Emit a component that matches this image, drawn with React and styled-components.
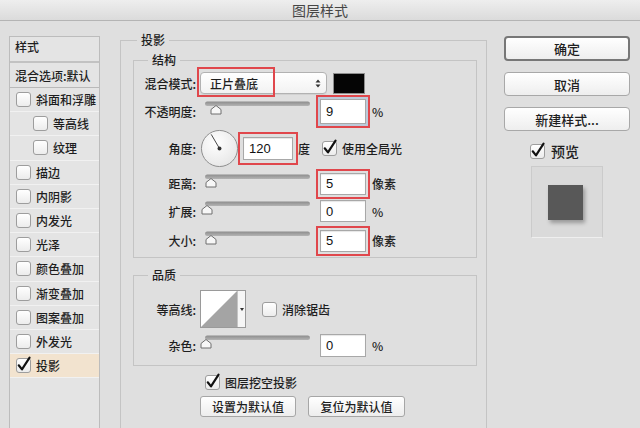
import React from "react";
import styled, { createGlobalStyle } from "styled-components";

const GlobalStyle = createGlobalStyle`
  html, body { margin: 0; padding: 0; background: #dfdfdf; overflow: hidden; }
  body { font-family: "Noto Sans CJK SC", "Noto Sans", sans-serif; font-weight: 500; color: #1e1e1e; }
  * { box-sizing: border-box; }
`;

const Window = styled.div`
  width: 640px;
  height: 428px;
  display: flex;
  flex-direction: column;
  overflow: hidden;
  background: #dfdfdf;
`;

const TitleBar = styled.div`
  height: 21px;
  flex-shrink: 0;
  display: flex;
  align-items: center;
  justify-content: center;
  background: linear-gradient(#eeeeee, #dbdbdb);
  border-bottom: 1px solid #b4b4b4;
  font-size: 14px;
  font-weight: 400;
  line-height: 20px;
  color: #454545;
`;

const Body = styled.div`
  flex: 1;
  display: flex;
  align-items: flex-start;
  min-height: 0;
`;

/* ---------- left style list ---------- */
const StyleList = styled.div`
  margin: 15px 0 0 9px;
  width: 91px;
  height: 400px;
  flex-shrink: 0;
  border: 1px solid #bcbcbc;
  background: #e4e4e4;
  display: flex;
  flex-direction: column;
  font-size: 12px;
`;

const ListHeader = styled.div`
  height: 26px;
  padding: 3px 0 0 5px;
  line-height: 14px;
  border-bottom: 2px solid #c2c2c2;
`;

const ListOptions = styled.div`
  height: 25px;
  display: flex;
  align-items: center;
  padding-left: 5px;
  border-bottom: 1px solid #b9b9b9;
  white-space: nowrap;
`;

const ListRow = styled.div`
  height: 24.2px;
  display: flex;
  align-items: center;
  gap: 5px;
  padding-left: ${(p) => (p.$indent ? 23 : 6)}px;
  border-bottom: 1px solid #f1f1f1;
  background: ${(p) => (p.$active ? "#f2e3cf" : "transparent")};
  white-space: nowrap;
`;

/* ---------- checkbox ---------- */
const Box = styled.span`
  display: inline-block;
  position: relative;
  width: 15px;
  height: 15px;
  flex-shrink: 0;
  margin-left: ${(p) => p.$ml || 0}px;
  border: 1px solid #9d9d9d;
  border-radius: 3px;
  background: linear-gradient(#ffffff, #ececec);
  svg { position: absolute; left: 0; top: 0; overflow: visible; }
`;

function Check({ checked, ml }) {
  return (
    <Box $ml={ml}>
      {checked && (
        <svg width="13" height="13" viewBox="0 0 12 12">
          <path d="M1.6 5.8 L4.6 9.6 L11.6 -1.2" stroke="#111" strokeWidth="2" fill="none" strokeLinecap="round" strokeLinejoin="round" />
        </svg>
      )}
    </Box>
  );
}

/* ---------- main column ---------- */
const MainCol = styled.div`
  margin: 12px 0 0 20px;
  width: 367px;
  flex-shrink: 0;
`;

const Group = styled.fieldset`
  margin: ${(p) => p.$mt || 0}px 0 0 0;
  padding: ${(p) => p.$pad};
  min-width: 0;
  height: ${(p) => (p.$h ? `${p.$h}px` : "auto")};
  border: 1px solid #c4c4c4;
  display: flex;
  flex-direction: column;
`;

const Legend = styled.legend`
  font-size: 12px;
  line-height: 14px;
  padding: 0 4px;
  margin-left: ${(p) => p.$ml || 0}px;
  color: #1e1e1e;
`;

const FormRow = styled.div`
  height: ${(p) => p.$h}px;
  margin-top: ${(p) => p.$mt || 0}px;
  display: flex;
  align-items: center;
  flex-shrink: 0;
`;

const Label = styled.span`
  width: 52px;
  flex-shrink: 0;
  text-align: right;
  font-size: 12px;
  white-space: nowrap;
`;

const Unit = styled.span`
  margin-left: ${(p) => p.$ml ?? 6}px;
  font-size: 12px;
  white-space: nowrap;
`;

const NumField = styled.input`
  width: ${(p) => p.$w || 46}px;
  height: ${(p) => p.$h || 23}px;
  flex-shrink: 0;
  margin: 0 0 0 ${(p) => p.$ml ?? 9}px;
  padding: 0 0 0 5px;
  border: 1px solid #a8a8a8;
  background: #fff;
  font: 13px "Liberation Sans", Arial, sans-serif;
  color: #111;
  box-shadow: ${(p) => (p.$focus ? "0 0 0 2px #bccbdb" : "inset 0 1px 1px rgba(0,0,0,0.1)")};
  outline: ${(p) => (p.$mark ? "2px solid #e0474c" : "none")};
  outline-offset: ${(p) => p.$off ?? 2}px;
`;

const SelectWrap = styled.div`
  position: relative;
  margin-left: 4px;
`;

const SelectBox = styled.div`
  width: 127px;
  height: 22px;
  border: 1px solid #b2b2b2;
  border-radius: 4px;
  background: linear-gradient(#ffffff, #f2f2f2);
  display: flex;
  align-items: center;
  justify-content: space-between;
  padding: 0 5px 0 9px;
  font-size: 12px;
  box-shadow: 0 1px 0 rgba(0, 0, 0, 0.06);
`;

const RedBox = styled.span`
  position: absolute;
  left: -3px;
  top: -5px;
  width: 78px;
  height: 30px;
  border: 2px solid #e0474c;
  pointer-events: none;
`;

const Swatch = styled.div`
  width: 32px;
  height: 21px;
  margin-left: 6px;
  background: #050505;
  border: 1px solid #8e8e8e;
`;

const SliderSvg = styled.svg`
  margin-left: 3px;
  flex-shrink: 0;
  display: block;
`;

function Slider({ pos }) {
  const cx = pos - 199;
  return (
    <SliderSvg width="112" height="20" viewBox="0 0 112 20">
      <defs>
        <linearGradient id="trk" x1="0" y1="0" x2="0" y2="1">
          <stop offset="0" stopColor="#8d8d8d" />
          <stop offset="1" stopColor="#b4b4b4" />
        </linearGradient>
      </defs>
      <rect x="6" y="0.5" width="105" height="4.5" rx="2.2" fill="url(#trk)" />
      <path
        d={`M${cx - 5} 13 L${cx - 5} 8.5 L${cx} 4.5 L${cx + 5} 8.5 L${cx + 5} 13 Z`}
        fill="#f7f7f7"
        stroke="#6f6f6f"
        strokeWidth="1"
        strokeLinejoin="round"
      />
    </SliderSvg>
  );
}

const Dial = styled.svg`
  margin-left: 4px;
  flex-shrink: 0;
  display: block;
`;

const ContourBox = styled.div`
  margin-left: 4px;
  width: 46px;
  height: 38px;
  border: 1px solid #9a9a9a;
  background: #fff;
  display: flex;
  flex-shrink: 0;
`;

const ContourStrip = styled.div`
  width: 8px;
  border-left: 1px solid #c4c4c4;
  background: #f6f6f6;
  display: flex;
  align-items: center;
  justify-content: center;
`;

const CheckLine = styled.div`
  height: 18px;
  margin: ${(p) => p.$m};
  display: flex;
  align-items: center;
  gap: ${(p) => p.$gap || 5}px;
  font-size: ${(p) => p.$fs || 12}px;
  white-space: nowrap;
`;

const ButtonRow = styled.div`
  margin: 5px 0 0 67px;
  display: flex;
  gap: 12px;
`;

const SmallButton = styled.button`
  width: ${(p) => p.$w}px;
  height: 21px;
  padding: 0;
  border: 1px solid #a6a6a6;
  border-radius: 3px;
  background: linear-gradient(#ffffff, #ededed);
  font: 500 12px "Noto Sans CJK SC", sans-serif;
  color: #1e1e1e;
`;

/* ---------- right column ---------- */
const SideCol = styled.div`
  margin: 15px 0 0 17px;
  width: 126px;
  flex-shrink: 0;
  display: flex;
  flex-direction: column;
`;

const SideButton = styled.button`
  height: ${(p) => (p.$primary ? 25 : 24)}px;
  margin-top: ${(p) => p.$mt || 0}px;
  padding: 0;
  border: ${(p) => (p.$primary ? "2px solid #777" : "1px solid #a8a8a8")};
  border-radius: 4px;
  background: linear-gradient(#ffffff, #eeeeee);
  font: 500 13px "Noto Sans CJK SC", sans-serif;
  color: #1e1e1e;
`;

const PreviewBox = styled.div`
  margin: 6px 0 0 27px;
  width: 72px;
  height: 72px;
  border: 1px solid #cbcbcb;
  border-bottom-color: #efefef;
  background: #dadada;
  display: flex;
  align-items: center;
  justify-content: center;
  padding-right: 3px;
`;

const PreviewSquare = styled.div`
  width: 35px;
  height: 35px;
  background: #585858;
  box-shadow: 2px 3px 4px rgba(0, 0, 0, 0.3);
`;

const listItems = [
  { t: "斜面和浮雕" },
  { t: "等高线", indent: true },
  { t: "纹理", indent: true },
  { t: "描边" },
  { t: "内阴影" },
  { t: "内发光" },
  { t: "光泽" },
  { t: "颜色叠加" },
  { t: "渐变叠加" },
  { t: "图案叠加" },
  { t: "外发光" },
  { t: "投影", checked: true, active: true },
];

function UpDown() {
  return (
    <svg width="6" height="9" viewBox="0 0 6 9">
      <path d="M0.5 3.5 L3 0.5 L5.5 3.5 Z M0.5 5.5 L3 8.5 L5.5 5.5 Z" fill="#333" />
    </svg>
  );
}

export default function App() {
  return (
    <Window>
      <GlobalStyle />
      <TitleBar>图层样式</TitleBar>
      <Body>
        <StyleList>
          <ListHeader>样式</ListHeader>
          <ListOptions>混合选项:默认</ListOptions>
          {listItems.map((it) => (
            <ListRow key={it.t} $indent={it.indent} $active={it.active}>
              <Check checked={it.checked} />
              {it.t}
            </ListRow>
          ))}
        </StyleList>

        <MainCol>
          <Group $pad="0 9px 0 12px" $h={420}>
            <Legend $ml={4}>投影</Legend>
            <Group $mt={6} $pad="3px 10px 1px 10px">
              <Legend $ml={4}>结构</Legend>
              <FormRow $h={26}>
                <Label>混合模式:</Label>
                <SelectWrap>
                  <SelectBox>
                    正片叠底
                    <UpDown />
                  </SelectBox>
                  <RedBox />
                </SelectWrap>
                <Swatch />
              </FormRow>
              <FormRow $h={30}>
                <Label>不透明度:</Label>
                <Slider pos={216} />
                <NumField readOnly value="9" $h={25} $mark $focus $off={2} />
                <Unit>%</Unit>
              </FormRow>
              <FormRow $h={44}>
                <Label>角度:</Label>
                <Dial width="39" height="39" viewBox="0 0 40 40">
                  <defs>
                    <radialGradient id="dialg" cx="0.4" cy="0.35" r="0.7">
                      <stop offset="0" stopColor="#ffffff" />
                      <stop offset="1" stopColor="#e6e6e6" />
                    </radialGradient>
                  </defs>
                  <circle cx="20" cy="20" r="18.5" fill="url(#dialg)" stroke="#8c8c8c" strokeWidth="1" />
                  <line x1="20" y1="20" x2="11.5" y2="5.5" stroke="#444" strokeWidth="1" />
                  <circle cx="20" cy="20" r="2" fill="#333" />
                </Dial>
                <NumField readOnly value="120" $w={50} $ml={4} $mark $off={3} />
                <Unit $ml={5}>度</Unit>
                <Check checked ml={12} />
                <Unit $ml={5}>使用全局光</Unit>
              </FormRow>
              <FormRow $h={27}>
                <Label>距离:</Label>
                <Slider pos={211} />
                <NumField readOnly value="5" $h={22} $mark $off={2} />
                <Unit>像素</Unit>
              </FormRow>
              <FormRow $h={28}>
                <Label>扩展:</Label>
                <Slider pos={207} />
                <NumField readOnly value="0" $h={22} />
                <Unit>%</Unit>
              </FormRow>
              <FormRow $h={31}>
                <Label>大小:</Label>
                <Slider pos={211} />
                <NumField readOnly value="5" $h={22} $mark $off={2} />
                <Unit>像素</Unit>
              </FormRow>
            </Group>

            <Group $mt={10} $pad="7px 10px 6px 10px">
              <Legend $ml={4}>品质</Legend>
              <FormRow $h={40}>
                <Label>等高线:</Label>
                <ContourBox>
                  <svg width="36" height="36" viewBox="0 0 36 36">
                    <path d="M0 36 L36 0 L36 36 Z" fill="#a4a4a4" />
                  </svg>
                  <ContourStrip>
                    <svg width="4" height="3" viewBox="0 0 4 3">
                      <path d="M0 0 L4 0 L2 3 Z" fill="#333" />
                    </svg>
                  </ContourStrip>
                </ContourBox>
                <Check ml={16} />
                <Unit $ml={5}>消除锯齿</Unit>
              </FormRow>
              <FormRow $h={28} $mt={2}>
                <Label>杂色:</Label>
                <Slider pos={206} />
                <NumField readOnly value="0" $h={23} />
                <Unit>%</Unit>
              </FormRow>
            </Group>

            <CheckLine $m="7px 0 0 72px">
              <Check checked />
              图层挖空投影
            </CheckLine>
            <ButtonRow>
              <SmallButton $w={96}>设置为默认值</SmallButton>
              <SmallButton $w={97}>复位为默认值</SmallButton>
            </ButtonRow>
          </Group>
        </MainCol>

        <SideCol>
          <SideButton $primary>确定</SideButton>
          <SideButton $mt={11}>取消</SideButton>
          <SideButton $mt={11}>新建样式...</SideButton>
          <CheckLine $m="11px 0 0 26px" $gap={6} $fs={14}>
            <Check checked />
            预览
          </CheckLine>
          <PreviewBox>
            <PreviewSquare />
          </PreviewBox>
        </SideCol>
      </Body>
    </Window>
  );
}
